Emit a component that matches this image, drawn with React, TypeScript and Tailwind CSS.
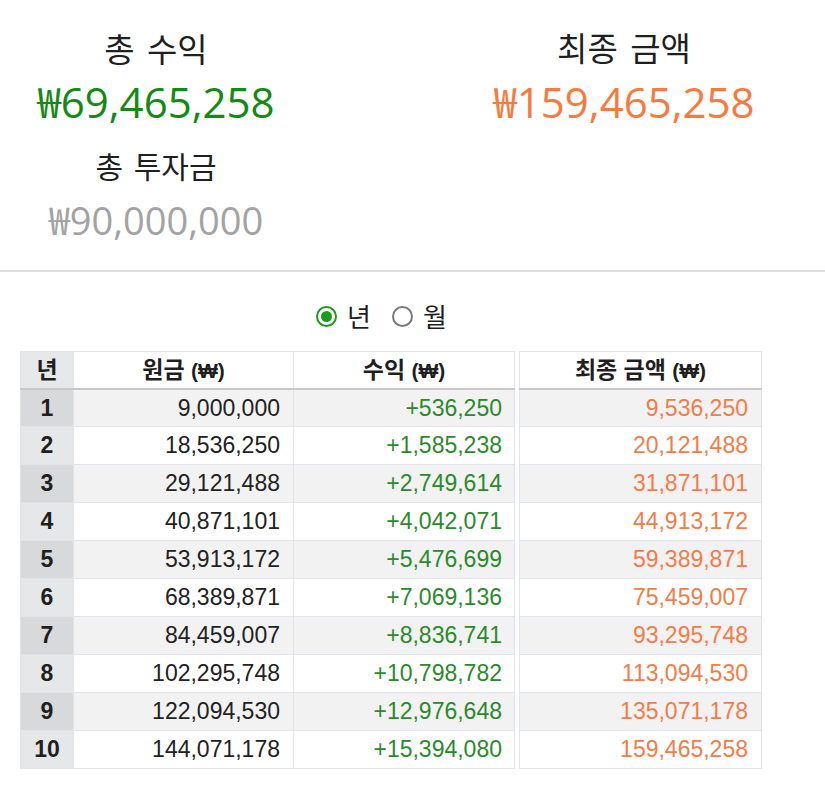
import React from "react";

const rows = [
  ["1", "9,000,000", "+536,250", "9,536,250"],
  ["2", "18,536,250", "+1,585,238", "20,121,488"],
  ["3", "29,121,488", "+2,749,614", "31,871,101"],
  ["4", "40,871,101", "+4,042,071", "44,913,172"],
  ["5", "53,913,172", "+5,476,699", "59,389,871"],
  ["6", "68,389,871", "+7,069,136", "75,459,007"],
  ["7", "84,459,007", "+8,836,741", "93,295,748"],
  ["8", "102,295,748", "+10,798,782", "113,094,530"],
  ["9", "122,094,530", "+12,976,648", "135,071,178"],
  ["10", "144,071,178", "+15,394,080", "159,465,258"],
];

const kr = { fontFamily: '"Noto Sans CJK KR", sans-serif' };
const num = { fontFamily: '"Open Sans", "Noto Sans CJK KR", sans-serif' };
const tbl = { fontFamily: '"Liberation Sans", "Noto Sans CJK KR", sans-serif' };

export default function App() {
  return (
    <div className="w-[825px] h-[790px] bg-white text-[#1f1f1f]">
      {/* Summary */}
      <div className="flex h-[270px]">
        <div className="w-[312px] flex flex-col items-center pt-[28px]">
          <div className="text-[33px] leading-[40px] [word-spacing:5px]" style={kr}>총 수익</div>
          <div className="text-[42px] leading-[56px] mt-[6px] text-[#138a13]" style={num}>₩69,465,258</div>
          <div className="text-[30px] leading-[40px] mt-[15px] [word-spacing:4px]" style={kr}>총 투자금</div>
          <div className="text-[38px] leading-[56px] mt-[7px] text-[#a3a3a3]" style={num}>₩90,000,000</div>
        </div>
        <div className="w-[312px] ml-[156px] flex flex-col items-center pt-[27px]">
          <div className="text-[33px] leading-[40px] [word-spacing:5px]" style={kr}>최종 금액</div>
          <div className="text-[42px] leading-[56px] mt-[7px] text-[#f97a3e]" style={num}>₩159,465,258</div>
        </div>
      </div>
      <div className="h-[2px] bg-[#dcdcdc]" />

      {/* Radio */}
      <div className="flex items-center h-[30px] mt-[29px] pl-[316px]" style={kr}>
        <label className="flex items-center">
          <span className="w-[21px] h-[21px] rounded-full border-[2px] border-[#1f9a1f] flex items-center justify-center">
            <span className="w-[11px] h-[11px] rounded-full bg-[#1f9a1f]" />
          </span>
          <span className="ml-[10px] text-[26px] leading-[30px]">년</span>
        </label>
        <label className="flex items-center ml-[21px]">
          <span className="w-[21px] h-[21px] rounded-full border-[2px] border-[#7a7a7a]" />
          <span className="ml-[10px] text-[26px] leading-[30px]">월</span>
        </label>
      </div>

      {/* Tables */}
      <div className="flex mt-[20px] ml-[20px] gap-[4px]" style={tbl}>
        <table className="border-collapse text-[23px]">
          <thead>
            <tr className="h-[37px]">
              <th className="w-[53px] p-0 bg-[#e7e8ea] border border-[#e1e4e8] border-b-[2px] border-b-[#c8c8c8] font-bold">년</th>
              <th className="w-[220px] p-0 bg-white border border-[#e1e4e8] border-b-[2px] border-b-[#c8c8c8] font-bold">
                원금 <span className="text-[21px]">(₩)</span>
              </th>
              <th className="w-[221px] p-0 bg-white border border-[#e1e4e8] border-b-[2px] border-b-[#c8c8c8] font-bold">
                수익 <span className="text-[21px]">(₩)</span>
              </th>
            </tr>
          </thead>
          <tbody>
            {rows.map((r, i) => (
              <tr key={r[0]} className={`h-[38px] ${i % 2 === 0 ? "bg-[#f2f2f2]" : "bg-white"}`}>
                <td className={`p-0 text-center font-bold border border-[#e1e4e8] ${i % 2 === 0 ? "bg-[#d8d9db]" : "bg-[#e6e7e9]"}`}>{r[0]}</td>
                <td className="p-0 pr-[13px] text-right border border-[#e1e4e8] text-[#222]">{r[1]}</td>
                <td className="p-0 pr-[12px] text-right border border-[#e1e4e8] text-[#2b8a2b]">{r[2]}</td>
              </tr>
            ))}
          </tbody>
        </table>
        <table className="border-collapse text-[23px]">
          <thead>
            <tr className="h-[37px]">
              <th className="w-[242px] p-0 bg-white border border-[#e1e4e8] border-b-[2px] border-b-[#c8c8c8] font-bold">
                최종 금액 <span className="text-[21px]">(₩)</span>
              </th>
            </tr>
          </thead>
          <tbody>
            {rows.map((r, i) => (
              <tr key={r[0]} className={`h-[38px] ${i % 2 === 0 ? "bg-[#f2f2f2]" : "bg-white"}`}>
                <td className="p-0 pr-[13px] text-right border border-[#e1e4e8] text-[#f47c48]">{r[3]}</td>
              </tr>
            ))}
          </tbody>
        </table>
      </div>
    </div>
  );
}
